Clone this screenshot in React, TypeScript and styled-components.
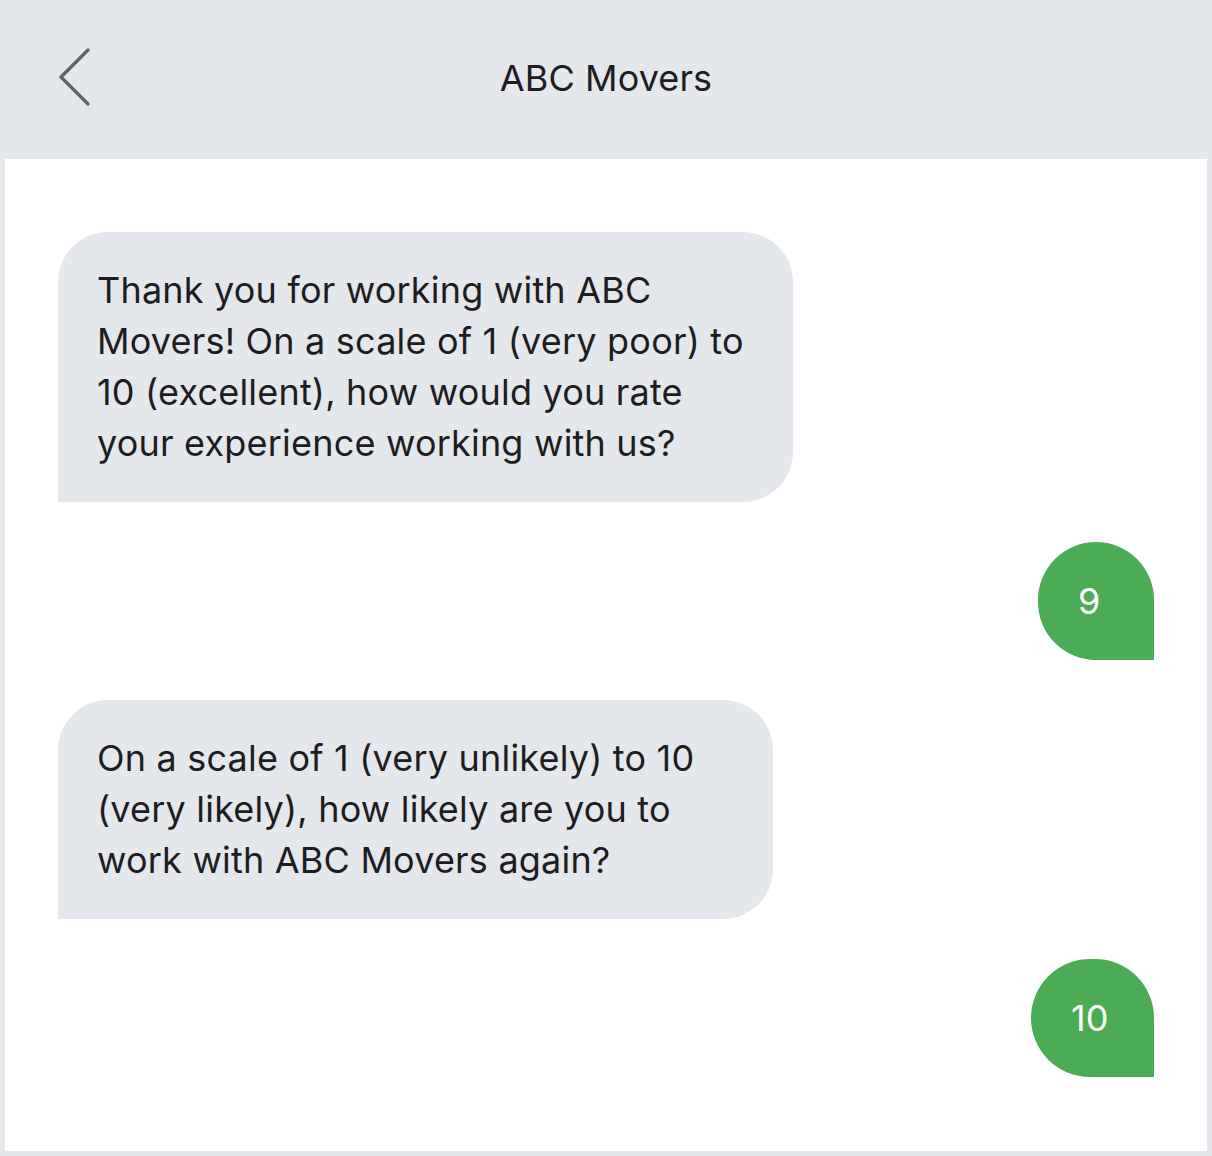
import React from "react";
import styled, { createGlobalStyle } from "styled-components";

const GlobalStyle = createGlobalStyle`
  html, body {
    margin: 0;
    padding: 0;
    background: #ffffff;
  }
  * {
    box-sizing: border-box;
  }
`;

const Frame = styled.div`
  width: 1212px;
  height: 1156px;
  background: #e4e7eb;
  display: flex;
  flex-direction: column;
  padding: 0 5px 5px;
  font-family: "Inter", "Liberation Sans", sans-serif;
  color: #1d1d1f;
`;

const Header = styled.header`
  height: 159px;
  flex: none;
  display: grid;
  grid-template-columns: 1fr auto 1fr;
  align-items: center;
  margin: 0 -5px;
  padding: 0 0 3px 58px;
`;

const BackButton = styled.button`
  width: 34px;
  height: 60px;
  padding: 0;
  border: none;
  background: transparent;
  display: flex;
  align-items: center;
  justify-content: flex-start;
  cursor: pointer;
`;

const Title = styled.h1`
  margin: 0;
  font-size: 36px;
  font-weight: 400;
  line-height: 1;
  letter-spacing: 0.1px;
  transform: translateX(-29px);
`;

const Thread = styled.main`
  flex: 1;
  background: #ffffff;
  display: flex;
  flex-direction: column;
  gap: 40px;
  padding: 73px 53px 0;
`;

const Incoming = styled.div<{ $width: number }>`
  align-self: flex-start;
  width: ${(p) => p.$width}px;
  background: #e4e7eb;
  border-radius: 50px 50px 50px 0;
  padding: 33px 10px 33px 39px;
  font-size: 36px;
  line-height: 51px;
  letter-spacing: 0.2px;
`;

const Outgoing = styled.div<{ $width: number }>`
  align-self: flex-end;
  width: ${(p) => p.$width}px;
  height: 118px;
  background: #4cab55;
  color: #ffffff;
  border-radius: 59px 59px 0 59px;
  display: flex;
  align-items: center;
  justify-content: flex-start;
  padding-left: 40px;
  font-size: 36px;
  line-height: 1;
`;

const ChevronLeft = () => (
  <svg width="34" height="60" viewBox="0 0 34 60" fill="none">
    <path
      d="M30 2 L3 29 L30 56"
      stroke="#5f6368"
      strokeWidth="3.2"
      strokeLinecap="round"
      strokeLinejoin="round"
    />
  </svg>
);

export default function App() {
  return (
    <>
      <GlobalStyle />
      <Frame>
        <Header>
          <BackButton aria-label="Back">
            <ChevronLeft />
          </BackButton>
          <Title>ABC Movers</Title>
          <span />
        </Header>
        <Thread>
          <Incoming $width={735}>
            Thank you for working with ABC
            <br />
            Movers! On a scale of 1 (very poor) to
            <br />
            10 (excellent), how would you rate
            <br />
            your experience working with us?
          </Incoming>
          <Outgoing $width={116}>9</Outgoing>
          <Incoming $width={715}>
            On a scale of 1 (very unlikely) to 10
            <br />
            (very likely), how likely are you to
            <br />
            work with ABC Movers again?
          </Incoming>
          <Outgoing $width={123}>10</Outgoing>
        </Thread>
      </Frame>
    </>
  );
}
